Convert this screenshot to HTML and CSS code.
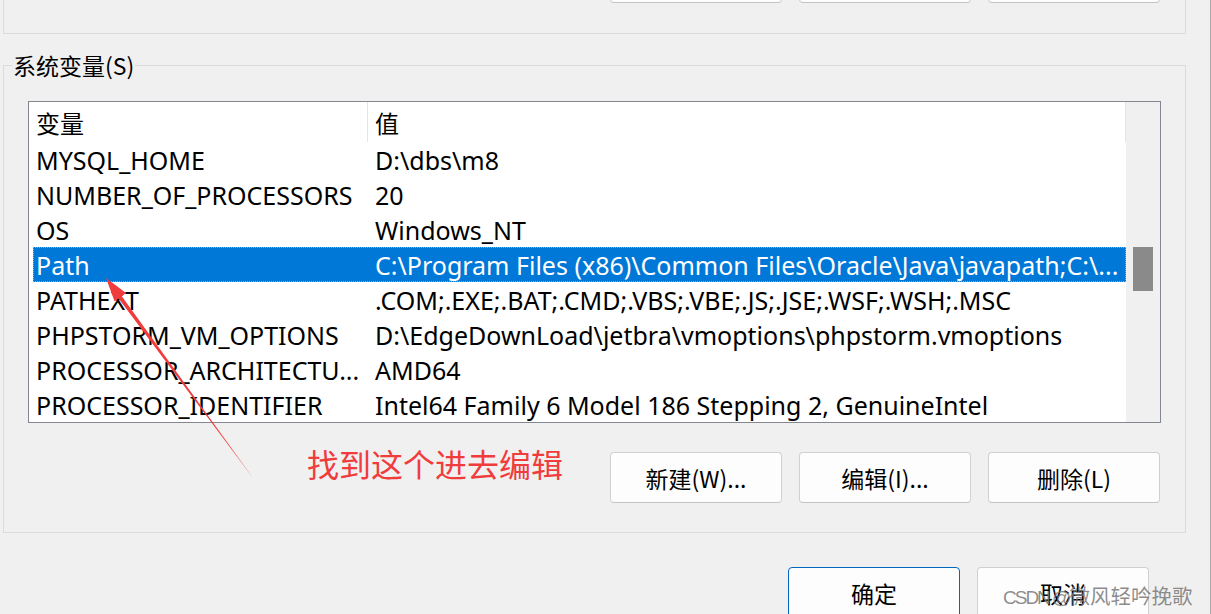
FILE: index.html
```html
<!DOCTYPE html>
<html lang="zh-CN">
<head>
<meta charset="utf-8">
<title>环境变量</title>
<link rel="stylesheet" href="styles.css">
</head>
<body>
<div class="window">
  <div class="group group-top">
    <div class="btn-row">
      <button class="btn" aria-label="新建"></button>
      <button class="btn" aria-label="编辑"></button>
      <button class="btn" aria-label="删除"></button>
    </div>
  </div>

  <div class="group group-sys">
    <div class="group-title">系统变量(S)</div>
    <div class="listview">
      <div class="lv-main">
        <div class="lv-header">
          <div class="hcell hcell-name">变量</div>
          <div class="hcell hcell-value">值</div>
        </div>
        <div class="lv-row"><div class="cell-name">MYSQL_HOME</div><div class="cell-value">D:\dbs\m8</div></div>
        <div class="lv-row"><div class="cell-name">NUMBER_OF_PROCESSORS</div><div class="cell-value">20</div></div>
        <div class="lv-row"><div class="cell-name">OS</div><div class="cell-value">Windows_NT</div></div>
        <div class="lv-row selected"><div class="cell-name">Path</div><div class="cell-value">C:\Program Files (x86)\Common Files\Oracle\Java\javapath;C:\...</div></div>
        <div class="lv-row"><div class="cell-name">PATHEXT</div><div class="cell-value">.COM;.EXE;.BAT;.CMD;.VBS;.VBE;.JS;.JSE;.WSF;.WSH;.MSC</div></div>
        <div class="lv-row"><div class="cell-name">PHPSTORM_VM_OPTIONS</div><div class="cell-value">D:\EdgeDownLoad\jetbra\vmoptions\phpstorm.vmoptions</div></div>
        <div class="lv-row"><div class="cell-name">PROCESSOR_ARCHITECTU...</div><div class="cell-value">AMD64</div></div>
        <div class="lv-row"><div class="cell-name">PROCESSOR_IDENTIFIER</div><div class="cell-value">Intel64 Family 6 Model 186 Stepping 2, GenuineIntel</div></div>
      </div>
      <div class="scrollbar"><div class="thumb"></div></div>
    </div>
    <div class="btn-row">
      <button class="btn">新建(W)...</button>
      <button class="btn">编辑(I)...</button>
      <button class="btn">删除(L)</button>
    </div>
  </div>

  <div class="dialog-buttons">
    <button class="btn btn-default">确定</button>
    <button class="btn">取消</button>
  </div>

  <svg class="annot-arrow" width="1211" height="614" viewBox="0 0 1211 614" aria-hidden="true">
    <polygon points="106,278 126,293 121.8,296.2 253,478 118.6,298.6 114.6,301.5" fill="#f03c3c"/>
  </svg>
  <div class="annot-text">找到这个进去编辑</div>
  <div class="watermark"><span class="wm-latin">CSDN @</span>微风轻吟挽歌</div>
</div>
</body>
</html>
```

FILE: styles.css
```css
* { box-sizing: border-box; }

html, body {
  margin: 0;
  padding: 0;
  background: #f0f0f0;
}

body {
  font-family: "Noto Sans", "Noto Sans CJK SC", sans-serif;
  font-size: 25px;
  color: #000;
}

.window {
  position: relative;
  width: 1211px;
  height: 614px;
  overflow: hidden;
  background: #f0f0f0;
  border-right: 1px solid #a8a8a8;
}

.group {
  margin-left: 3px;
  width: 1183px;
  border: 1px solid #dcdcdc;
}

.group-top {
  margin-top: -60px;
  padding: 11px 0 30px;
}

.group-sys {
  margin-top: 31px;
  padding-bottom: 29px;
}

.group-title {
  display: block;
  width: fit-content;
  margin: -13px 0 0 8px;
  padding: 0 1px;
  font-family: "Noto Sans CJK SC", sans-serif;
  font-size: 23px;
  line-height: 24px;
  background: #f0f0f0;
}

.btn-row {
  display: flex;
  justify-content: flex-end;
  gap: 17px;
  padding: 0 25px;
}

.group-sys .btn-row {
  margin-top: 29px;
}

.btn {
  width: 172px;
  height: 51px;
  margin: 0;
  padding: 0;
  background: #fdfdfd;
  border: 1px solid #d0d0d0;
  border-bottom-color: #c4c4c4;
  border-radius: 4px;
  font-family: "Noto Sans CJK SC", "Noto Sans", sans-serif;
  font-size: 23px;
  color: #000;
}

.btn-default {
  border: 1px solid #0067c0;
}

.listview {
  display: flex;
  margin: 24px 24px 0;
  height: 322px;
  border: 1px solid #828790;
  background: #fff;
}

.lv-main {
  width: 1097px;
  overflow: hidden;
}

.lv-header {
  display: flex;
  height: 40px;
  align-items: stretch;
  font-family: "Noto Sans CJK SC", sans-serif;
  font-size: 24px;
}

.hcell {
  display: flex;
  align-items: center;
  padding-left: 7px;
}

.hcell-name {
  width: 339px;
  border-right: 1px solid #e5e5e5;
}

.hcell-value {
  flex: 1;
  border-right: 1px solid #e5e5e5;
}

.lv-row {
  display: flex;
  align-items: center;
  height: 35px;
  margin-left: 4px;
  white-space: nowrap;
}

.lv-row.selected {
  background: #0078d7;
  color: #fff;
  outline: 1px dotted #e89a3c;
  outline-offset: -1px;
}

.cell-name {
  width: 334px;
  padding-left: 3px;
  overflow: hidden;
}

.cell-value {
  flex: 1;
  padding-left: 8px;
  overflow: hidden;
  text-overflow: ellipsis;
}

.scrollbar {
  width: 34px;
  background: #f0f0f0;
  padding: 145px 0 0 7px;
}

.thumb {
  width: 20px;
  height: 44px;
  background: #8a8a8a;
}

.dialog-buttons {
  display: flex;
  justify-content: flex-end;
  gap: 17px;
  margin-top: 34px;
  padding-right: 61px;
}

.annot-arrow {
  position: absolute;
  left: 0;
  top: 0;
  pointer-events: none;
}

.annot-text {
  position: absolute;
  left: 307px;
  top: 443px;
  font-family: "Noto Sans CJK SC", sans-serif;
  font-size: 32px;
  line-height: 40px;
  color: #f03c3c;
  white-space: nowrap;
}

.watermark {
  position: absolute;
  left: 1003px;
  top: 580px;
  font-family: "Noto Sans CJK SC", sans-serif;
  font-size: 20.5px;
  line-height: 30px;
  color: rgba(120, 120, 120, 0.85);
  white-space: nowrap;
}

.wm-latin {
  font-family: "Liberation Sans", sans-serif;
  font-size: 19px;
  letter-spacing: -2px;
}
```
